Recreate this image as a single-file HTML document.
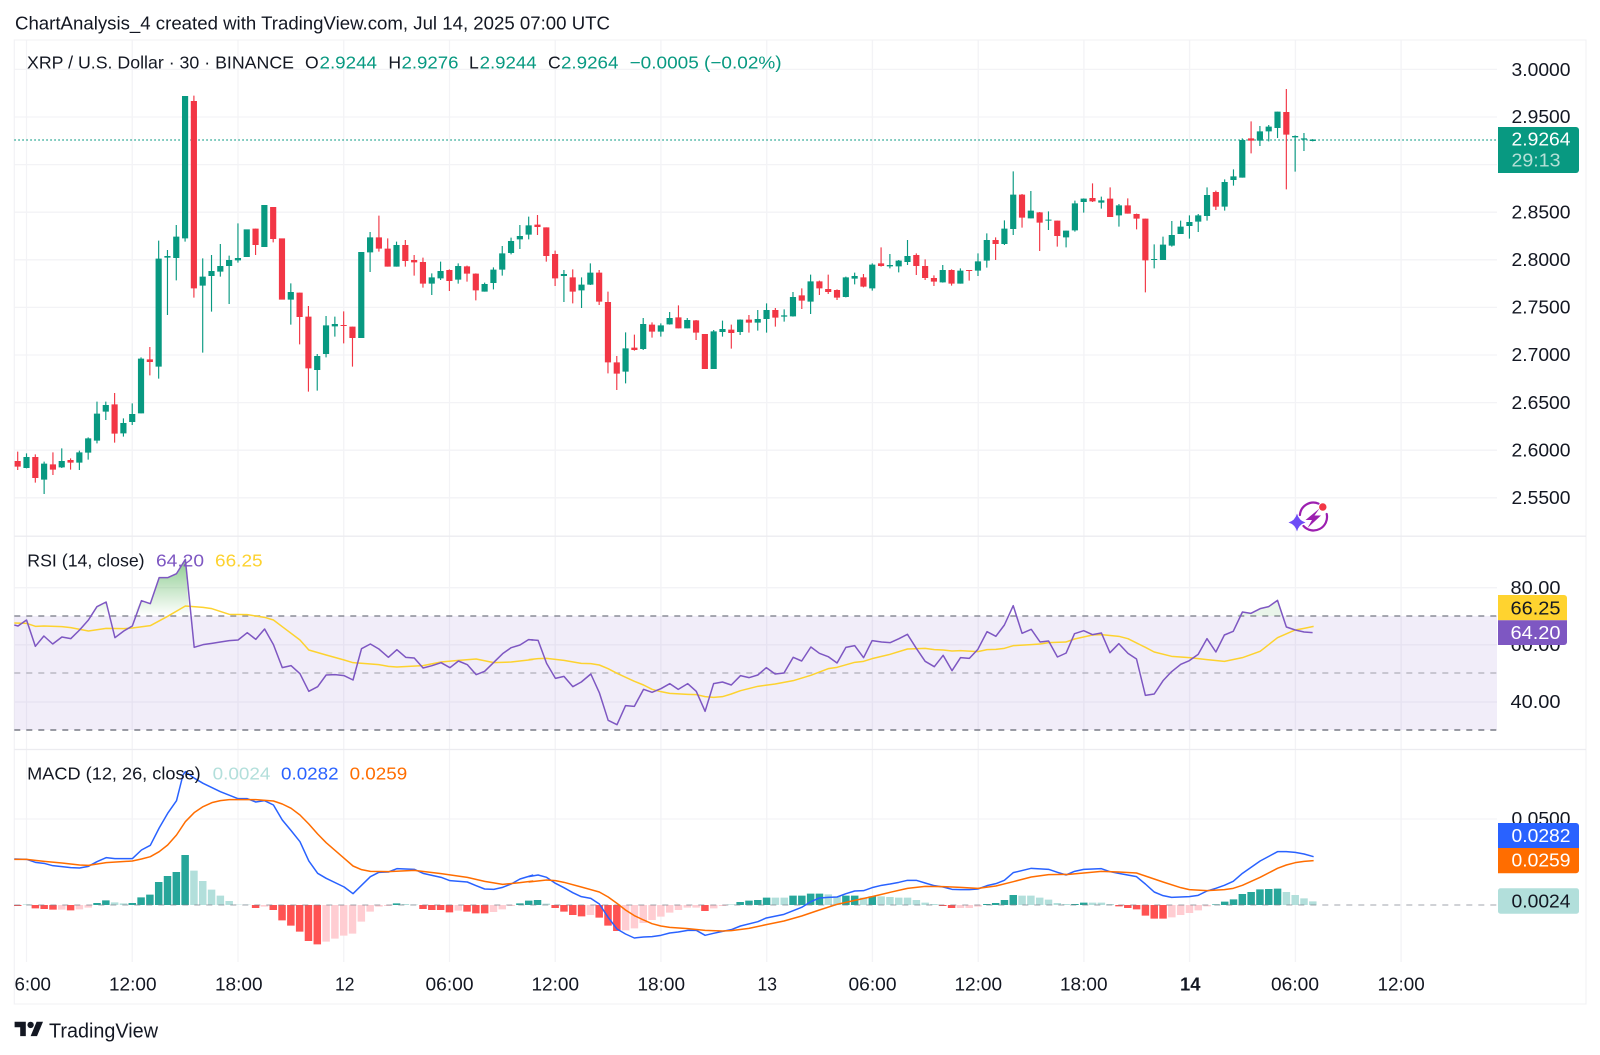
<!DOCTYPE html>
<html lang="en">
<head>
<meta charset="utf-8">
<title>XRP / U.S. Dollar chart</title>
<style>
html,body{margin:0;padding:0;background:#fff;width:1600px;height:1055px;overflow:hidden}
svg{display:block}
text{font-family:"Liberation Sans",sans-serif;fill:#131722}
.lg{font-size:17.6px}
.ax{font-size:18.4px}
.tm{font-size:18px}
.ln{fill:none;vector-effect:non-scaling-stroke;stroke-linejoin:round;stroke-width:1.5}
.wk{fill:none;vector-effect:non-scaling-stroke;stroke-width:1.15}
</style>
</head>
<body>
<svg xmlns="http://www.w3.org/2000/svg" width="1600" height="1055" viewBox="0 0 1600 1055">
<defs>
<linearGradient id="gf" gradientUnits="userSpaceOnUse" x1="0" y1="88" x2="0" y2="257"><stop offset="0" stop-color="#4caf50" stop-opacity=".65"/><stop offset="1" stop-color="#4caf50" stop-opacity="0"/></linearGradient>
</defs>
<rect width="1600" height="1055" fill="#fff"/>

<!-- Title -->
<text x="15" y="29.3" font-size="18" textLength="595" lengthAdjust="spacingAndGlyphs">ChartAnalysis_4 created with TradingView.com, Jul 14, 2025 07:00 UTC</text>

<!-- Grid -->
<path fill="none" stroke="#f3f3f6" stroke-width="1.3" d="M26.5 40V962M132.2 40V962M238 40V962M343.7 40V962M449.5 40V962M555.2 40V962M660.9 40V962M766.7 40V962M872.4 40V962M978.2 40V962M1083.9 40V962M1189.6 40V962M1295.4 40V962M1401.1 40V962"/>
<path fill="none" stroke="#f3f3f6" stroke-width="1.3" d="M14.3 69.4H1497M14.3 117H1497M14.3 164.6H1497M14.3 212.2H1497M14.3 259.8H1497M14.3 307.4H1497M14.3 355H1497M14.3 402.6H1497M14.3 450.2H1497M14.3 497.8H1497M14.3 587.7H1497M14.3 644.8H1497M14.3 702H1497M14.3 819H1497"/>
<!-- Frame + separators -->
<rect x="14.3" y="40" width="1571.7" height="964" fill="none" stroke="#f2f2f5" stroke-width="1.2"/>
<path fill="none" stroke="#ececf0" stroke-width="1.3" d="M14.3 536.2H1586M14.3 749.5H1586"/>

<!-- RSI band -->
<rect x="14.3" y="616" width="1482.7" height="114" fill="#7e57c2" fill-opacity=".105"/>
<path fill="none" stroke="#787b86" stroke-opacity=".85" stroke-width="1.4" stroke-dasharray="6 6" d="M14.3 616H1497"/>
<path fill="none" stroke="#787b86" stroke-opacity=".55" stroke-width="1.2" stroke-dasharray="6 6" d="M14.3 673H1497"/>
<path fill="none" stroke="#787b86" stroke-width="1.4" stroke-dasharray="6 6" d="M14.3 730H1497"/>

<!-- Price line -->
<path fill="none" stroke="#089981" stroke-width="1.2" stroke-dasharray="1.5 2.5" d="M14.3 140H1498"/>

<!-- Candles: wicks -->
<g transform="translate(17.7,0) scale(8.81,.33333)">
<path class="wk" stroke="#089981" d="M1 1360V1405M3 1385V1482M5 1345V1404M7 1352V1410M8 1312V1379M9 1205V1330M10 1205V1260M12 1255V1310M13 1210V1275M14 1072V1240M16 722V1136M17 750V945M18 675V841M19 288V725M21 775V1058M22 765V935M23 732V830M24 767V912M25 670V788M31 850V974M34 1062V1172M35 948V1072M36 950V1010M40 696V816M43 725V800M47 820V885M48 785V840M50 790V851M53 848V875M54 802V868M55 738V827M56 713V763M57 675V747M58 650V718M62 810V906M64 832V924M65 790V855M69 997V1150M71 954V1050M73 970V1010M74 936V974M76 954V985M79 990V1107M80 962V1010M82 958V1005M84 930V992M85 910V998M87 928V965M88 876V950M90 824V942M94 830V892M95 818V853M97 790V872M99 762V805M100 780V817M101 720V795M105 795V848M107 805V851M109 760V828M110 700V803M112 661V735M113 514V705M115 573V655M117 634V690M119 692V742M120 602V695M121 595V638M123 590V626M125 612V680M129 733V805M130 710V780M131 663V740M132 662V702M133 646V716M134 642V696M135 562V662M137 538V632M138 508V557M139 415V533M141 378V438M142 375V424M143 335V414M145 406V515M146 399V453M147 417V424"/>
<path class="wk" stroke="#f23645" d="M0 1355V1410M2 1363V1448M4 1357V1425M6 1375V1409M11 1179V1328M15 1041V1126M20 287V893M27 686V765M29 621V727M32 878V1033M33 918V1175M37 934V1030M38 980V1100M41 647V755M42 715V800M44 720V800M45 765V827M46 773V863M49 808V873M51 797V845M52 820V901M59 645V705M60 682V785M61 752V858M63 808V910M66 810V915M67 875V1120M68 1068V1170M70 1004V1052M72 967V1013M75 916V985M77 960V1020M81 974V1046M83 945V998M86 924V980M89 865V927M91 842V885M92 824V882M93 868V900M96 822V862M98 742V800M102 760V825M103 778V840M104 826V858M106 808V857M108 810V842M111 712V780M114 582V683M116 636V753M118 662V740M122 550V606M124 562V651M126 595V641M127 641V688M128 656V877M136 572V630M140 364V460M144 267V568"/>
</g>
<!-- Candles: bodies -->
<g transform="translate(14.6,0) scale(8.81,.33333)">
<path fill="#089981" d="M1 1371h.7V1404h-.7zM3 1391h.7V1439h-.7zM5 1383h.7V1402h-.7zM7 1357h.7V1388h-.7zM8 1315h.7V1358h-.7zM9 1241h.7V1322h-.7zM10 1215h.7V1235h-.7zM12 1269h.7V1300h-.7zM13 1242h.7V1266h-.7zM14 1076h.7V1240h-.7zM16 776h.7V1100h-.7zM17 768h.7V773h-.7zM18 710h.7V774h-.7zM19 288h.7V715h-.7zM21 830h.7V857h-.7zM22 813h.7V828h-.7zM23 798h.7V815h-.7zM24 780h.7V798h-.7zM25 774h.7V781h-.7zM26 688h.7V771h-.7zM28 615h.7V741h-.7zM31 876h.7V899h-.7zM34 1068h.7V1110h-.7zM35 976h.7V1062h-.7zM36 972h.7V979h-.7zM39 756h.7V1014h-.7zM40 712h.7V757h-.7zM43 735h.7V800h-.7zM47 832h.7V851h-.7zM48 813h.7V835h-.7zM50 798h.7V839h-.7zM53 852h.7V875h-.7zM54 809h.7V849h-.7zM55 760h.7V809h-.7zM56 723h.7V759h-.7zM57 708h.7V718h-.7zM58 676h.7V704h-.7zM62 822h.7V828h-.7zM64 854h.7V871h-.7zM65 818h.7V854h-.7zM69 1045h.7V1115h-.7zM71 972h.7V1047h-.7zM73 976h.7V995h-.7zM74 954h.7V973h-.7zM76 960h.7V985h-.7zM79 994h.7V1107h-.7zM80 987h.7V996h-.7zM82 959h.7V996h-.7zM84 957h.7V968h-.7zM85 930h.7V957h-.7zM87 946h.7V950h-.7zM88 891h.7V949h-.7zM90 844h.7V905h-.7zM94 832h.7V891h-.7zM95 828h.7V836h-.7zM97 794h.7V865h-.7zM99 795h.7V799h-.7zM100 782h.7V799h-.7zM101 768h.7V786h-.7zM105 810h.7V847h-.7zM107 812h.7V851h-.7zM109 784h.7V812h-.7zM110 720h.7V782h-.7zM112 686h.7V732h-.7zM113 584h.7V687h-.7zM115 632h.7V655h-.7zM117 659h.7V662h-.7zM119 692h.7V712h-.7zM120 610h.7V691h-.7zM121 596h.7V606h-.7zM123 601h.7V608h-.7zM125 616h.7V646h-.7zM129 777h.7V780h-.7zM130 734h.7V780h-.7zM131 705h.7V737h-.7zM132 680h.7V702h-.7zM133 666h.7V678h-.7zM134 646h.7V665h-.7zM135 585h.7V648h-.7zM137 546h.7V620h-.7zM138 529h.7V540h-.7zM139 420h.7V533h-.7zM141 394h.7V422h-.7zM142 380h.7V394h-.7zM143 335h.7V384h-.7zM145 408h.7V412h-.7zM146 415h.7V419h-.7zM147 419h.7V423h-.7z"/>
<path fill="#f23645" d="M0 1383h.7V1400h-.7zM2 1371h.7V1434h-.7zM4 1393h.7V1409h-.7zM6 1380h.7V1388h-.7zM11 1213h.7V1301h-.7zM15 1078h.7V1086h-.7zM20 303h.7V865h-.7zM27 686h.7V735h-.7zM29 621h.7V717h-.7zM30 715h.7V899h-.7zM32 878h.7V951h-.7zM33 950h.7V1105h-.7zM37 975h.7V978h-.7zM38 980h.7V1014h-.7zM41 712h.7V746h-.7zM42 746h.7V800h-.7zM44 735h.7V783h-.7zM45 780h.7V787h-.7zM46 786h.7V851h-.7zM49 810h.7V843h-.7zM51 799h.7V821h-.7zM52 821h.7V871h-.7zM59 674h.7V681h-.7zM60 682h.7V768h-.7zM61 762h.7V835h-.7zM63 832h.7V875h-.7zM66 818h.7V905h-.7zM67 906h.7V1087h-.7zM68 1087h.7V1121h-.7zM70 1043h.7V1050h-.7zM72 974h.7V995h-.7zM75 952h.7V985h-.7zM77 961h.7V998h-.7zM78 1002h.7V1107h-.7zM81 989h.7V999h-.7zM83 959h.7V968h-.7zM86 930h.7V953h-.7zM89 886h.7V902h-.7zM91 844h.7V865h-.7zM92 867h.7V876h-.7zM93 870h.7V893h-.7zM96 832h.7V860h-.7zM98 790h.7V798h-.7zM102 765h.7V798h-.7zM103 798h.7V834h-.7zM104 834h.7V845h-.7zM106 810h.7V851h-.7zM108 810h.7V813h-.7zM111 720h.7V732h-.7zM114 584h.7V653h-.7zM116 637h.7V668h-.7zM118 662h.7V708h-.7zM122 594h.7V604h-.7zM124 596h.7V651h-.7zM126 616h.7V641h-.7zM127 642h.7V656h-.7zM128 656h.7V781h-.7zM136 576h.7V620h-.7zM140 415h.7V422h-.7zM144 336h.7V404h-.7z"/>
</g>

<!-- RSI fills and lines -->
<g transform="translate(0,530) scale(.3401,.33333)">
<polygon fill="url(#gf)" points="389,257 416,212 442,221 468,143 493,143 519,131 545,88 556,257"/>
<polygon fill="url(#gf)" points="270,257 285,230 312,216 318,257"/>
<polyline class="ln" stroke="#fdd22f" points="42,279 78,280 104,289 129,288 182,290 208,293 260,303 312,295 364,296 389,294 442,287 493,259 545,228 597,232 623,236 674,253 727,254 778,262 804,270 830,290 882,330 908,360 959,375 1012,390 1038,398 1114,404 1142,409 1167,411 1244,407 1297,396 1348,391 1400,387 1452,398 1503,396 1554,390 1568,388"/>
<polyline class="ln" stroke="#7e57c2" points="42,285 53,288 78,270 104,349 129,318 155,342 182,321 208,326 234,300 260,270 285,230 312,216 338,323 364,303 389,288 416,212 442,221 468,143 493,143 519,131 545,88 571,352 597,344 623,340 648,336 674,332 700,330 727,308 752,328 778,297 804,344 830,413 856,407 882,431 908,484 934,470 959,435 985,434 1012,437 1038,450 1063,356 1089,342 1114,357 1142,382 1167,359 1193,382 1218,384 1244,414 1270,407 1297,398 1323,413 1348,393 1374,404 1400,434 1425,424 1452,397 1478,371 1503,353 1529,345 1554,329 1568,330"/>
</g>
<g transform="translate(533,590) scale(.3401,.33333)">
<polyline class="ln" stroke="#fdd22f" points="-13,209 15,206 40,205 91,211 142,220 170,221 195,225 221,236 247,250 298,274 325,285 350,298 376,305 402,310 455,313 480,314 506,320 531,322 557,320 583,312 610,302 661,289 712,282 765,272 817,256 868,236 894,232 946,217 972,214 997,206 1050,193 1101,177 1153,175 1180,179 1206,180 1232,183 1257,182 1308,185 1335,179 1361,178 1386,175 1412,167 1465,164 1491,162 1516,158 1568,156"/>
<polyline class="ln" stroke="#7e57c2" points="-13,149 15,151 40,220 66,265 91,259 117,290 142,276 170,252 195,308 221,391 247,404 272,347 298,349 325,298 350,307 376,296 402,281 427,298 455,281 480,304 506,364 531,281 557,276 583,285 610,257 635,263 661,255 686,233 712,252 738,249 765,202 790,213 817,171 842,190 868,200 894,219 920,172 946,167 972,203 997,152 1025,156 1050,158 1076,146 1101,133 1127,175 1153,214 1180,230 1206,196 1232,242 1257,203 1283,205 1308,178 1335,125 1361,139 1386,105 1412,47 1438,130 1465,118 1491,156 1516,153 1542,201 1568,189"/>
</g>
<g transform="translate(1066,490) scale(.3406,.33333)">
<polygon fill="#4caf50" fill-opacity=".12" points="500,378 518,366 543,370 570,356 595,350 621,331 635,378"/>
<polyline class="ln" stroke="#fdd22f" points="0,456 25,447 78,435 104,434 155,439 182,446 233,472 259,486 310,499 362,503 414,509 465,514 518,503 570,484 595,464 621,443 673,420 699,415 727,409"/>
<polyline class="ln" stroke="#7e57c2" points="0,490 25,431 52,422 78,434 104,429 129,488 155,461 182,490 207,507 233,616 259,612 285,572 310,545 337,523 362,512 388,493 414,446 440,486 465,435 491,424 518,366 543,370 570,356 595,350 621,331 647,411 673,420 699,426 724,428"/>
</g>

<!-- MACD histogram -->
<g transform="translate(14,905) scale(8.81,.33333)">
<path fill="#26a69a" d="M9 0h.85v-6h-.85zM10 0h.85v-14h-.85zM13 0h.85v-6h-.85zM14 0h.85v-23h-.85zM15 0h.85v-31h-.85zM16 0h.85v-69h-.85zM17 0h.85v-87h-.85zM18 0h.85v-99h-.85zM19 0h.85v-150h-.85zM43 0h.85v-5h-.85zM57 0h.85v-5h-.85zM58 0h.85v-13h-.85zM59 0h.85v-15h-.85zM82 0h.85v-9h-.85zM83 0h.85v-13h-.85zM84 0h.85v-15h-.85zM85 0h.85v-22h-.85zM88 0h.85v-28h-.85zM89 0h.85v-28h-.85zM90 0h.85v-34h-.85zM91 0h.85v-34h-.85zM94 0h.85v-28h-.85zM95 0h.85v-28h-.85zM97 0h.85v-26h-.85zM110 0h.85v-3h-.85zM111 0h.85v-6h-.85zM112 0h.85v-15h-.85zM113 0h.85v-30h-.85zM120 0h.85v-3h-.85zM121 0h.85v-7h-.85zM136 0h.85v-2h-.85zM137 0h.85v-10h-.85zM138 0h.85v-17h-.85zM139 0h.85v-33h-.85zM140 0h.85v-39h-.85zM141 0h.85v-47h-.85zM142 0h.85v-48h-.85zM143 0h.85v-49h-.85z"/>
<path fill="#b2dfdb" d="M1 0h.85v-2h-.85zM11 0h.85v-8h-.85zM12 0h.85v-5h-.85zM20 0h.85v-103h-.85zM21 0h.85v-72h-.85zM22 0h.85v-46h-.85zM23 0h.85v-28h-.85zM24 0h.85v-12h-.85zM25 0h.85v-1h-.85zM26 0h.85v-1h-.85zM44 0h.85v-3h-.85zM45 0h.85v-1h-.85zM60 0h.85v-4h-.85zM81 0h.85v-2h-.85zM86 0h.85v-22h-.85zM87 0h.85v-22h-.85zM92 0h.85v-32h-.85zM93 0h.85v-26h-.85zM96 0h.85v-22h-.85zM98 0h.85v-26h-.85zM99 0h.85v-24h-.85zM100 0h.85v-22h-.85zM101 0h.85v-22h-.85zM102 0h.85v-15h-.85zM103 0h.85v-7h-.85zM104 0h.85v-3h-.85zM114 0h.85v-28h-.85zM115 0h.85v-28h-.85zM116 0h.85v-22h-.85zM117 0h.85v-16h-.85zM118 0h.85v-6h-.85zM119 0h.85v-3h-.85zM122 0h.85v-7h-.85zM123 0h.85v-7h-.85zM124 0h.85v-3h-.85zM144 0h.85v-39h-.85zM145 0h.85v-30h-.85zM146 0h.85v-20h-.85zM147 0h.85v-11h-.85z"/>
<path fill="#ff5252" d="M0 0h.85v3h-.85zM2 0h.85v10h-.85zM3 0h.85v12h-.85zM4 0h.85v14h-.85zM6 0h.85v16h-.85zM27 0h.85v9h-.85zM29 0h.85v15h-.85zM30 0h.85v46h-.85zM31 0h.85v62h-.85zM32 0h.85v80h-.85zM33 0h.85v108h-.85zM34 0h.85v118h-.85zM46 0h.85v12h-.85zM47 0h.85v15h-.85zM48 0h.85v15h-.85zM49 0h.85v22h-.85zM51 0h.85v20h-.85zM52 0h.85v25h-.85zM53 0h.85v25h-.85zM61 0h.85v9h-.85zM62 0h.85v20h-.85zM63 0h.85v30h-.85zM64 0h.85v34h-.85zM66 0h.85v38h-.85zM67 0h.85v62h-.85zM68 0h.85v78h-.85zM78 0h.85v18h-.85zM105 0h.85v3h-.85zM106 0h.85v9h-.85zM125 0h.85v4h-.85zM126 0h.85v9h-.85zM127 0h.85v13h-.85zM128 0h.85v32h-.85zM129 0h.85v41h-.85zM130 0h.85v41h-.85z"/>
<path fill="#ffcdd2" d="M5 0h.85v14h-.85zM7 0h.85v13h-.85zM8 0h.85v8h-.85zM28 0h.85v5h-.85zM35 0h.85v110h-.85zM36 0h.85v101h-.85zM37 0h.85v92h-.85zM38 0h.85v86h-.85zM39 0h.85v50h-.85zM40 0h.85v20h-.85zM41 0h.85v5h-.85zM42 0h.85v3h-.85zM50 0h.85v17h-.85zM54 0h.85v21h-.85zM55 0h.85v13h-.85zM56 0h.85v3h-.85zM65 0h.85v30h-.85zM69 0h.85v76h-.85zM70 0h.85v70h-.85zM71 0h.85v54h-.85zM72 0h.85v45h-.85zM73 0h.85v35h-.85zM74 0h.85v23h-.85zM75 0h.85v15h-.85zM76 0h.85v8h-.85zM77 0h.85v8h-.85zM79 0h.85v10h-.85zM80 0h.85v3h-.85zM107 0h.85v9h-.85zM108 0h.85v9h-.85zM109 0h.85v5h-.85zM131 0h.85v37h-.85zM132 0h.85v30h-.85zM133 0h.85v24h-.85zM134 0h.85v16h-.85zM135 0h.85v4h-.85z"/>
</g>
<path fill="none" stroke="#787b86" stroke-opacity=".55" stroke-width="1.2" stroke-dasharray="6 6" d="M14.3 905H1497"/>

<!-- MACD lines -->
<g transform="translate(0,750) scale(.3401,.33333)">
<polyline class="ln" stroke="#2962ff" points="42,327 78,328 104,337 129,340 155,347 182,350 208,353 234,354 260,349 285,335 312,323 338,326 389,326 416,300 442,286 468,234 493,190 519,152 538,75 545,65 572,85 597,100 648,125 700,146 727,146 752,156 778,152 804,165 830,210 856,242 882,275 908,333 934,370 959,385 1012,411 1038,431 1089,380 1114,367 1142,366 1167,356 1218,358 1244,370 1270,376 1297,382 1323,392 1374,396 1400,407 1425,417 1452,418 1478,412 1503,402 1529,387 1568,375"/>
<polyline class="ln" stroke="#ff6d00" points="42,328 78,328 130,334 182,339 234,345 260,346 312,338 389,333 416,327 442,320 468,305 493,285 519,255 545,215 572,187 597,170 623,158 648,152 674,149 752,149 804,153 830,162 856,175 882,195 908,222 934,252 959,278 1012,325 1038,348 1063,359 1089,364 1142,365 1218,361 1297,371 1374,382 1425,394 1478,403 1529,398 1568,393"/>
</g>
<g transform="translate(533,780) scale(.3401,.33333)">
<polyline class="ln" stroke="#2962ff" points="-13,290 15,285 40,292 66,310 91,323 117,338 142,350 170,355 195,372 221,412 247,447 272,462 298,474 325,471 350,470 376,466 402,459 427,456 455,451 480,451 506,466 531,460 557,454 583,449 610,438 661,425 686,414 738,403 765,392 790,382 817,365 842,354 868,352 894,351 920,341 946,333 972,332 997,323 1025,316 1050,312 1076,307 1101,301 1127,301 1153,309 1180,317 1206,321 1232,328 1257,329 1283,329 1308,327 1335,317 1361,311 1386,301 1412,278 1465,265 1516,268 1542,277 1568,285"/>
<polyline class="ln" stroke="#ff6d00" points="-13,306 40,300 66,302 91,307 142,321 195,336 221,351 247,370 272,390 298,407 325,420 350,431 376,438 402,442 455,446 506,451 557,453 583,452 635,445 686,434 738,423 790,408 842,390 894,373 946,361 997,350 1050,337 1101,325 1153,319 1206,320 1257,322 1308,325 1361,318 1412,305 1465,291 1516,284 1568,283"/>
</g>
<g transform="translate(1066,780) scale(.3406,.33333)">
<polyline class="ln" stroke="#2962ff" points="0,285 25,274 52,268 104,266 129,275 155,280 207,290 233,312 259,336 285,347 310,352 362,350 388,346 414,333 440,325 465,316 491,304 518,280 570,243 621,215 647,215 673,217 699,222 727,230"/>
<polyline class="ln" stroke="#ff6d00" points="0,284 52,279 104,274 155,276 207,279 233,288 285,306 337,323 362,329 414,332 465,329 491,325 518,316 570,292 621,265 647,255 673,248 699,244 727,242"/>
</g>

<!-- Main legend -->
<text class="lg" x="27" y="68.6" textLength="267" lengthAdjust="spacingAndGlyphs">XRP / U.S. Dollar · 30 · BINANCE</text>
<text class="lg" x="305" y="68.6">O</text>
<text class="lg" x="319.5" y="68.6" textLength="57.5" lengthAdjust="spacingAndGlyphs" style="fill:#089981">2.9244</text>
<text class="lg" x="388.4" y="68.6">H</text>
<text class="lg" x="401.5" y="68.6" textLength="57" lengthAdjust="spacingAndGlyphs" style="fill:#089981">2.9276</text>
<text class="lg" x="469" y="68.6">L</text>
<text class="lg" x="479.6" y="68.6" textLength="57" lengthAdjust="spacingAndGlyphs" style="fill:#089981">2.9244</text>
<text class="lg" x="548" y="68.6">C</text>
<text class="lg" x="561" y="68.6" textLength="57.4" lengthAdjust="spacingAndGlyphs" style="fill:#089981">2.9264</text>
<text class="lg" x="629.6" y="68.6" textLength="152" lengthAdjust="spacingAndGlyphs" style="fill:#089981">−0.0005 (−0.02%)</text>

<!-- RSI legend -->
<text class="lg" x="27.3" y="566.3" textLength="117.3" lengthAdjust="spacingAndGlyphs">RSI (14, close)</text>
<text class="lg" x="156" y="566.3" textLength="48" lengthAdjust="spacingAndGlyphs" style="fill:#7e57c2">64.20</text>
<text class="lg" x="215" y="566.3" textLength="47.6" lengthAdjust="spacingAndGlyphs" style="fill:#fdd22f">66.25</text>

<!-- MACD legend -->
<text class="lg" x="27.2" y="779.6" textLength="173.5" lengthAdjust="spacingAndGlyphs">MACD (12, 26, close)</text>
<text class="lg" x="212.6" y="779.6" textLength="57.8" lengthAdjust="spacingAndGlyphs" style="fill:#b2dfdb">0.0024</text>
<text class="lg" x="281" y="779.6" textLength="57.6" lengthAdjust="spacingAndGlyphs" style="fill:#2962ff">0.0282</text>
<text class="lg" x="349.6" y="779.6" textLength="57.6" lengthAdjust="spacingAndGlyphs" style="fill:#ff6d00">0.0259</text>

<!-- Price axis -->
<text class="ax" x="1511.5" y="75.8" textLength="59" lengthAdjust="spacingAndGlyphs">3.0000</text>
<text class="ax" x="1511.5" y="123.2" textLength="59" lengthAdjust="spacingAndGlyphs">2.9500</text>
<text class="ax" x="1511.5" y="218.4" textLength="59" lengthAdjust="spacingAndGlyphs">2.8500</text>
<text class="ax" x="1511.5" y="266" textLength="59" lengthAdjust="spacingAndGlyphs">2.8000</text>
<text class="ax" x="1511.5" y="313.6" textLength="59" lengthAdjust="spacingAndGlyphs">2.7500</text>
<text class="ax" x="1511.5" y="361.2" textLength="59" lengthAdjust="spacingAndGlyphs">2.7000</text>
<text class="ax" x="1511.5" y="408.8" textLength="59" lengthAdjust="spacingAndGlyphs">2.6500</text>
<text class="ax" x="1511.5" y="456.4" textLength="59" lengthAdjust="spacingAndGlyphs">2.6000</text>
<text class="ax" x="1511.5" y="504" textLength="59" lengthAdjust="spacingAndGlyphs">2.5500</text>
<text class="ax" x="1510.5" y="594" textLength="50" lengthAdjust="spacingAndGlyphs">80.00</text>
<text class="ax" x="1510.5" y="651" textLength="50" lengthAdjust="spacingAndGlyphs">60.00</text>
<text class="ax" x="1510.5" y="708.2" textLength="50" lengthAdjust="spacingAndGlyphs">40.00</text>
<text class="ax" x="1511.5" y="825.2" textLength="59" lengthAdjust="spacingAndGlyphs">0.0500</text>

<!-- Price tag -->
<path fill="#089981" d="M1498 127H1576a3 3 0 0 1 3 3V170a3 3 0 0 1-3 3H1498Z"/>
<text class="ax" x="1511.5" y="145.6" textLength="59" lengthAdjust="spacingAndGlyphs" style="fill:#fff">2.9264</text>
<text class="ax" x="1511.5" y="166.4" textLength="49" lengthAdjust="spacingAndGlyphs" style="fill:#b5e0d7">29:13</text>

<!-- RSI tags -->
<path fill="#ffd32f" d="M1498 595H1564a3 3 0 0 1 3 3V620.3H1498Z"/>
<text class="ax" x="1510.5" y="614.3" textLength="50" lengthAdjust="spacingAndGlyphs">66.25</text>
<path fill="#7e57c2" d="M1498 620.3H1567V642a3 3 0 0 1-3 3H1498Z"/>
<text class="ax" x="1510.5" y="639" textLength="50" lengthAdjust="spacingAndGlyphs" style="fill:#fff">64.20</text>

<!-- MACD tags -->
<path fill="#2962ff" d="M1498 823H1576a3 3 0 0 1 3 3V848H1498Z"/>
<text class="ax" x="1511.5" y="842" textLength="59" lengthAdjust="spacingAndGlyphs" style="fill:#fff">0.0282</text>
<path fill="#ff6d00" d="M1498 848H1579V870.3a3 3 0 0 1-3 3H1498Z"/>
<text class="ax" x="1511.5" y="866.6" textLength="59" lengthAdjust="spacingAndGlyphs" style="fill:#fff">0.0259</text>
<rect x="1498" y="888.3" width="81" height="25.4" rx="2.5" fill="#b2dfdb"/>
<text class="ax" x="1511.5" y="907.6" textLength="59" lengthAdjust="spacingAndGlyphs">0.0024</text>

<!-- Time axis -->
<text class="tm" x="14.5" y="990.3" textLength="36.5" lengthAdjust="spacingAndGlyphs">6:00</text>
<text class="tm" x="109" y="990.3" textLength="47.5" lengthAdjust="spacingAndGlyphs">12:00</text>
<text class="tm" x="215" y="990.3" textLength="47.5" lengthAdjust="spacingAndGlyphs">18:00</text>
<text class="tm" x="335" y="990.3" textLength="19.4" lengthAdjust="spacingAndGlyphs">12</text>
<text class="tm" x="425.5" y="990.3" textLength="48" lengthAdjust="spacingAndGlyphs">06:00</text>
<text class="tm" x="531.5" y="990.3" textLength="47.5" lengthAdjust="spacingAndGlyphs">12:00</text>
<text class="tm" x="637.5" y="990.3" textLength="47.5" lengthAdjust="spacingAndGlyphs">18:00</text>
<text class="tm" x="757.5" y="990.3" textLength="19.5" lengthAdjust="spacingAndGlyphs">13</text>
<text class="tm" x="848.5" y="990.3" textLength="48" lengthAdjust="spacingAndGlyphs">06:00</text>
<text class="tm" x="954.5" y="990.3" textLength="47.5" lengthAdjust="spacingAndGlyphs">12:00</text>
<text class="tm" x="1060" y="990.3" textLength="47.5" lengthAdjust="spacingAndGlyphs">18:00</text>
<text class="tm" x="1180" y="990.3" textLength="20.5" lengthAdjust="spacingAndGlyphs" font-weight="700">14</text>
<text class="tm" x="1271" y="990.3" textLength="48" lengthAdjust="spacingAndGlyphs">06:00</text>
<text class="tm" x="1377.5" y="990.3" textLength="47.2" lengthAdjust="spacingAndGlyphs">12:00</text>

<!-- Icon -->
<g>
<path fill="none" stroke="#9c1fb0" stroke-width="2.2" stroke-linecap="round" d="M1318.5 503.6A13.5 13.5 0 0 0 1299.9 515M1303.5 526A13.5 13.5 0 0 0 1326.7 514"/>
<path fill="#9c1fb0" d="M1319.5 508.5L1305.5 520H1312L1307.5 528L1321 515.5H1314.5Z"/>
<circle cx="1322.8" cy="507" r="3.7" fill="#f23645"/>
<path fill="#6d4cf6" d="M1297 513.5Q1298.8 520.5 1305.5 522.5Q1298.8 524.5 1297 531.5Q1295.2 524.5 1288.5 522.5Q1295.2 520.5 1297 513.5Z"/>
</g>

<!-- Footer logo -->
<g transform="translate(14.6,1018.5) scale(.8)" fill="#131722">
<path d="M14 22H7V11H0V4h14v18z"/>
<path d="M28 22h-8l7.5-18h8L28 22z"/>
<circle cx="20" cy="8" r="4"/>
</g>
<text x="49" y="1037.3" font-size="20" textLength="109" lengthAdjust="spacingAndGlyphs">TradingView</text>
</svg>
</body>
</html>
